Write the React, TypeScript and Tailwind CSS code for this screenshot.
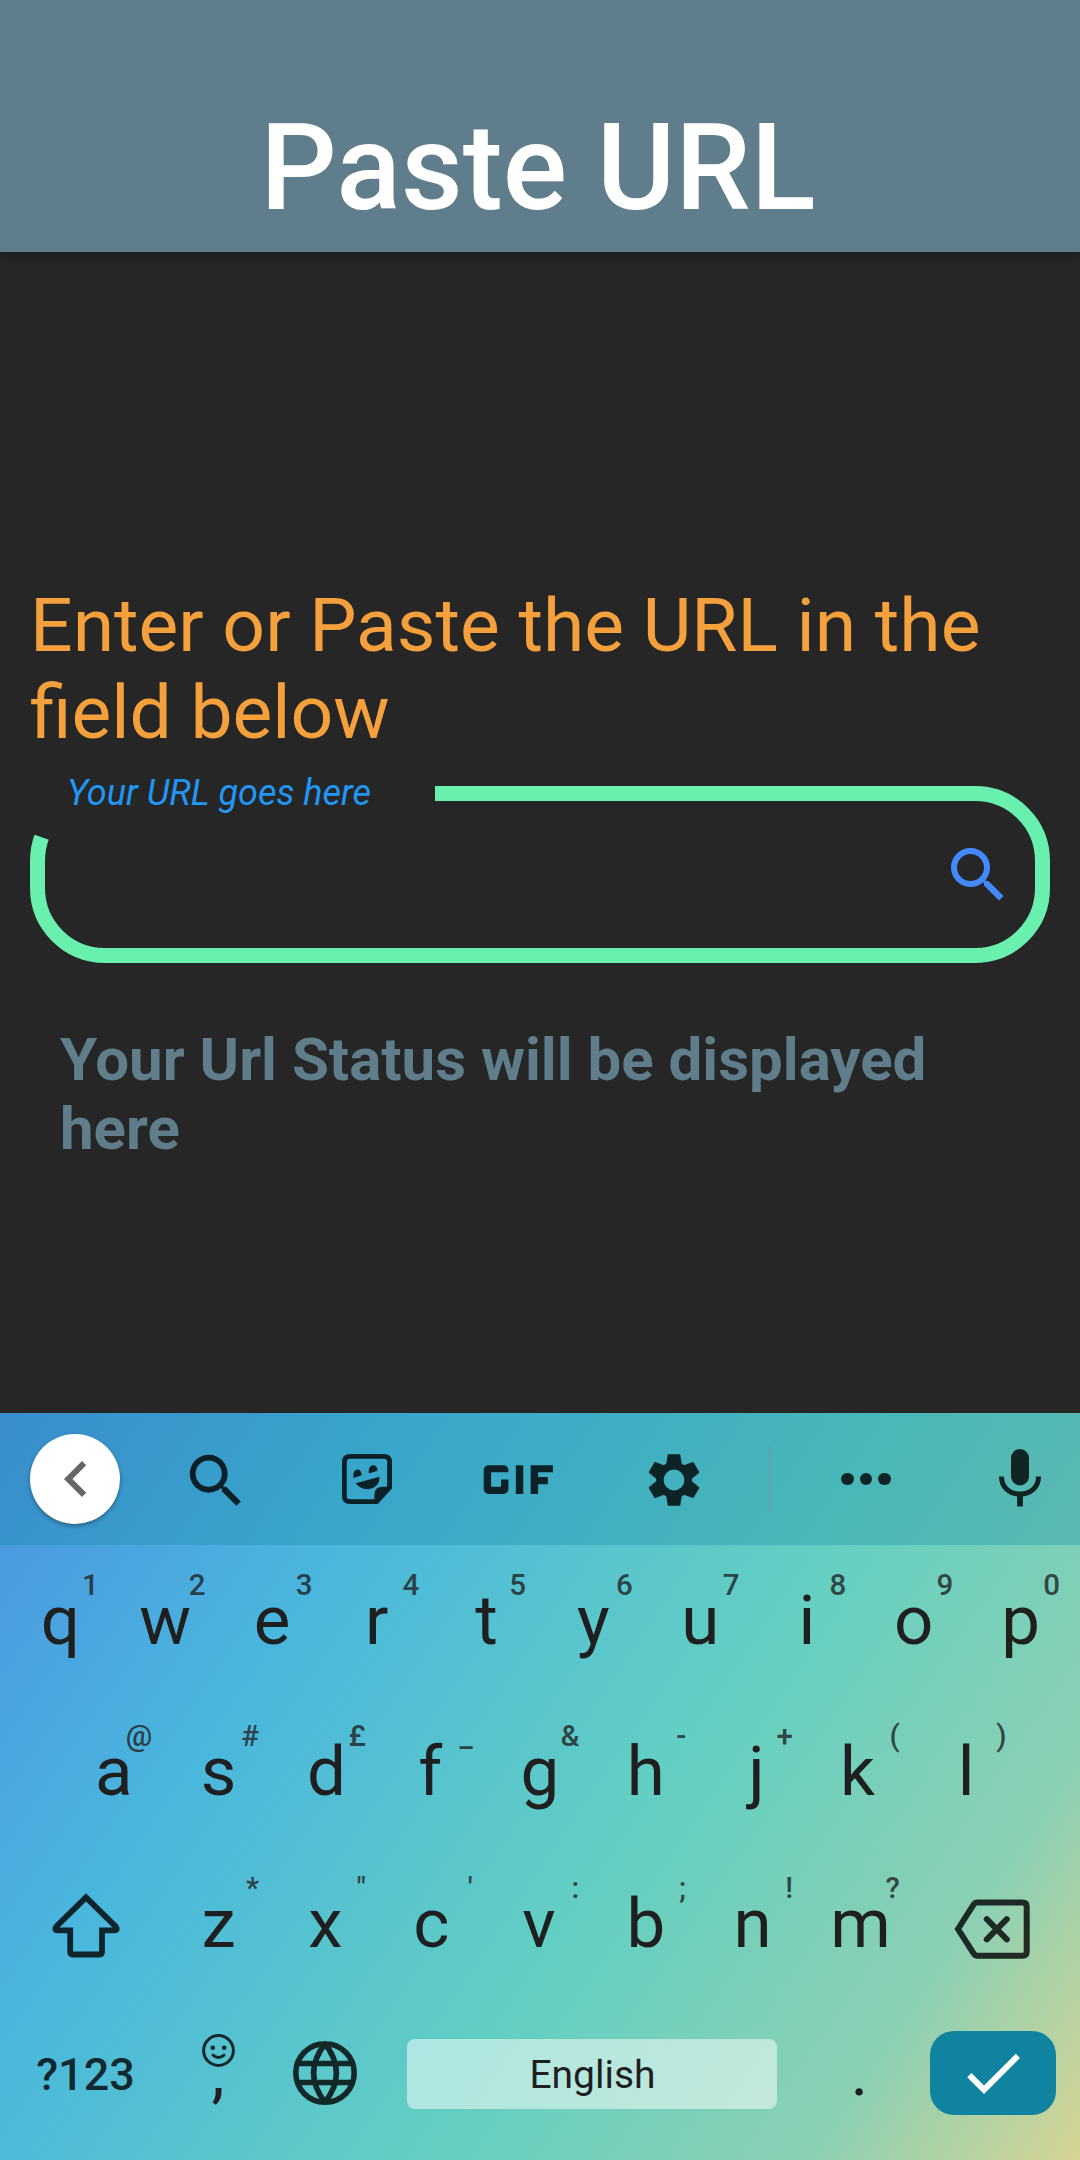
import React from "react";
import { MdCheck, MdChevronLeft, MdGif, MdSearch } from "react-icons/md";

type KeyDef = { label: string; hint: string; nudge?: number };

const ROW_ONE: KeyDef[] = [
  { label: "q", hint: "1", nudge: 1 },
  { label: "w", hint: "2", nudge: -1 },
  { label: "e", hint: "3", nudge: -1 },
  { label: "r", hint: "4", nudge: -3 },
  { label: "t", hint: "5" },
  { label: "y", hint: "6" },
  { label: "u", hint: "7" },
  { label: "i", hint: "8" },
  { label: "o", hint: "9" },
  { label: "p", hint: "0" },
];
const ROW_TWO: KeyDef[] = [
  { label: "a", hint: "@", nudge: 1 },
  { label: "s", hint: "#", nudge: -1 },
  { label: "d", hint: "£" },
  { label: "f", hint: "_", nudge: -3 },
  { label: "g", hint: "&" },
  { label: "h", hint: "-", nudge: -1 },
  { label: "j", hint: "+", nudge: 3 },
  { label: "k", hint: "(", nudge: -3 },
  { label: "l", hint: ")", nudge: -1 },
];
const ROW_THREE: KeyDef[] = [
  { label: "z", hint: "*", nudge: -1 },
  { label: "x", hint: '"', nudge: -1 },
  { label: "c", hint: "'", nudge: -2 },
  { label: "v", hint: ":", nudge: -1 },
  { label: "b", hint: ";", nudge: -1 },
  { label: "n", hint: "!", nudge: -1 },
  { label: "m", hint: "?" },
];

function Key({ def }: { def: KeyDef }) {
  return (
    <div className="flex w-[106.8px] flex-col pt-[14px]">
      <span className="pr-[14px] text-right text-[29.5px] font-medium leading-[30px] text-[#212121]/80">{def.hint}</span>
      <span
        className="-mt-[14px] text-center text-[69px] leading-[70px] text-[#1f1f1f]"
        style={{ transform: `translateX(${def.nudge ?? 0}px)` }}
      >
        {def.label}
      </span>
    </div>
  );
}

function StickerIcon() {
  return (
    <svg width="50" height="50" viewBox="0 0 50 50">
      <g fill="#000" opacity="0.8">
        <path d="M8 2.4H42Q47.6 2.4 47.6 8V33.5L34.5 47.6H8Q2.4 47.6 2.4 42V8Q2.4 2.4 8 2.4Z" fill="none" stroke="#000" strokeWidth="4.8" />
        <path d="M32.4 47V41Q32.4 32.7 40.5 32.7H49V35L36 49.5Z" />
        <path d="M11.6 23.9C9.6 14 19.6 12.6 19.7 21.3Z" />
        <path d="M27 19.4C25 9.8 35.2 8.4 35.6 16.8Z" />
        <path d="M13.6 29.2L37.6 22.8C38 36.5 20.5 39 13.6 29.2Z" />
      </g>
    </svg>
  );
}

const TOOTH_ANGLES = [0, 60, 120, 180, 240, 300];

function GearIcon() {
  return (
    <svg width="54" height="54" viewBox="-27 -27 54 54">
      <mask id="gear-hole">
        <rect x="-27" y="-27" width="54" height="54" fill="white" />
        <circle r="10.4" fill="black" />
      </mask>
      <g mask="url(#gear-hole)" fill="#000" stroke="#000" strokeWidth="1.6" strokeLinejoin="round" opacity="0.8">
        <circle r="17.2" />
        {TOOTH_ANGLES.map((angle) => (
          <path key={angle} d="M-5.5 -25H5.5L7 -16L7 0H-7V-16Z" transform={`rotate(${angle})`} />
        ))}
      </g>
    </svg>
  );
}

function MicIcon() {
  return (
    <svg width="42" height="58" viewBox="0 0 42 58">
      <g fill="none" stroke="#000" strokeWidth="5" opacity="0.8">
        <rect x="12" y="0" width="18" height="36.5" rx="9" fill="#000" stroke="none" />
        <path d="M2.5 27.5C2.5 38.5 10.5 45 21 45S39.5 38.5 39.5 27.5" />
        <path d="M21 46V57.5" strokeWidth="5.8" />
      </g>
    </svg>
  );
}

function ShiftIcon() {
  return (
    <svg width="70" height="66" viewBox="51 1892 70 66" fill="none" stroke="#000" strokeOpacity="0.8" strokeWidth="5.8">
      <path d="M86 1897.4L56.2 1926.6Q53.8 1930.3 57.5 1930.3H70.2V1952Q70.2 1954.5 72.7 1954.5H99.5Q102 1954.5 102 1952V1930.3H114.5Q118.2 1930.3 115.8 1926.6Z" />
    </svg>
  );
}

function BackspaceIcon() {
  return (
    <svg width="78" height="62" viewBox="953 1898 78 62" fill="none" stroke="#000" strokeOpacity="0.8" strokeWidth="6">
      <path d="M958 1929L974 1904Q975.2 1902.4 977 1902.4H1022.5Q1026.7 1902.4 1026.7 1906.5V1951.5Q1026.7 1955.7 1022.5 1955.7H977Q975.2 1955.7 974 1954Z" />
      <path d="M986.8 1919.2L1006.8 1939.4M1006.8 1919.2L986.8 1939.4" strokeLinecap="round" />
    </svg>
  );
}

function SmileIcon() {
  return (
    <svg width="33" height="33" viewBox="0 0 33 33" fill="none" stroke="currentColor" strokeWidth="3">
      <circle cx="16.5" cy="16.5" r="14.9" />
      <circle cx="10.8" cy="13.7" r="2.3" fill="currentColor" stroke="none" />
      <circle cx="22.2" cy="13.7" r="2.3" fill="currentColor" stroke="none" />
      <path d="M11 21.2Q16.5 25.8 22 21.2" strokeLinecap="round" />
    </svg>
  );
}

function GlobeIcon() {
  return (
    <svg width="64" height="64" viewBox="-32 -32 64 64" fill="none" stroke="#000" strokeOpacity="0.8" strokeWidth="5.6">
      <path d="M0 -29.2A29.2 29.2 0 1 0 0 29.2A29.2 29.2 0 1 0 0 -29.2ZM0 -29.2C-15 -10 -15 10 0 29.2C15 10 15 -10 0 -29.2ZM-28 -9.5H28M-28 9.5H28" />
    </svg>
  );
}

function Toolbar() {
  return (
    <div className="flex h-[132px] items-center bg-[#0f83a0]/30 pl-[30px] text-black/80">
      <button className="flex size-[90px] items-center justify-center rounded-full bg-white pl-[2px] text-[#666] shadow-[0_2px_4px_rgba(0,0,0,0.35)]">
        <MdChevronLeft size={72} />
      </button>
      <div className="ml-[21px] flex w-[150px] justify-center pt-[3px]">
        <MdSearch size={70} />
      </div>
      <div className="ml-px flex w-[150px] justify-center">
        <StickerIcon />
      </div>
      <div className="ml-px flex w-[150px] justify-center">
        <MdGif className="h-[115px] w-[118.6px] shrink-0" preserveAspectRatio="none" />
      </div>
      <div className="ml-[6px] flex w-[150px] justify-center pt-[2px]">
        <GearIcon />
      </div>
      <div className="ml-[19px] h-[66px] w-[3px] bg-[#78909c]/40" />
      <div className="ml-[20px] flex w-[150px] justify-center gap-[6px]">
        <span className="size-[12.8px] rounded-full bg-black/80" />
        <span className="size-[12.8px] rounded-full bg-black/80" />
        <span className="size-[12.8px] rounded-full bg-black/80" />
      </div>
      <div className="ml-[19px] flex w-[120px] justify-center pb-[2px]">
        <MicIcon />
      </div>
    </div>
  );
}

function Keyboard() {
  return (
    <section className="h-[747px] bg-[linear-gradient(124deg,#4c92e0_0%,#49b6de_26.5%,#63cfc2_58%,#8cd0b3_83%,#d6d494_100%)]">
      <Toolbar />
      <div className="flex flex-col pt-[11px]">
        <div className="flex h-[151.4px] justify-center">
          {ROW_ONE.map((k) => <Key key={k.label} def={k} />)}
        </div>
        <div className="flex h-[151.4px] justify-center">
          {ROW_TWO.map((k) => <Key key={k.label} def={k} />)}
        </div>
        <div className="flex h-[151.4px] justify-center">
          <div className="flex w-[160.2px] justify-center pt-[33px]"><ShiftIcon /></div>
          {ROW_THREE.map((k) => <Key key={k.label} def={k} />)}
          <div className="flex w-[160.2px] justify-center pr-[4px] pt-[39px]"><BackspaceIcon /></div>
        </div>
        <div className="flex h-[125px] items-center pl-[6px]">
          <div className="w-[159px] pt-[3px] text-center text-[45px] font-medium leading-[45px] text-black/80">?123</div>
          <div className="flex h-full w-[106px] flex-col items-center pt-[24px] text-black/80">
            <SmileIcon />
            <span className="-mt-[29px] text-[66px] leading-[70px] text-[#1f1f1f]">,</span>
          </div>
          <div className="flex w-[107px] justify-center"><GlobeIcon /></div>
          <div className="ml-[29px] mt-[2px] flex h-[70px] w-[370px] items-center justify-center rounded-[8px] bg-white/50 pl-px pt-[3px] text-[39px] text-[#1f1f1f]">English</div>
          <div className="ml-[29px] w-[107px] text-center text-[66px] leading-[70px] text-[#1f1f1f]">.</div>
          <button className="ml-[17px] flex h-[84px] w-[126px] items-center justify-center rounded-[24px] bg-[#0f83a0] text-white">
            <MdCheck size={72} />
          </button>
        </div>
      </div>
    </section>
  );
}

export default function App() {
  return (
    <div className="flex h-[2160px] w-[1080px] flex-col overflow-hidden bg-[#262626] font-['Roboto',sans-serif]">
      <header className="flex h-[252px] shrink-0 items-end justify-center bg-[#607d8b] pb-[14px] pr-[4px] shadow-[0_3px_10px_rgba(0,0,0,0.3)]">
        <h1 className="text-[120px] font-medium leading-[140px] text-white">Paste URL</h1>
      </header>
      <main className="h-[1161px] px-[30px] pt-[330px]">
        <p className="text-[75px] leading-[87px] text-[#f4a03c]">
          Enter or Paste the URL in the
          <br />
          field below
        </p>
        <div className="relative mt-[30px] flex h-[177px] items-center justify-end rounded-[75px] border-[15px] border-[#69f0ae] pr-[21px]">
          <span className="absolute -left-[18px] -top-[18px] h-[60px] w-[408px] bg-[#262626] [clip-path:polygon(0_0,100%_0,100%_45px,60px_60px,24px_57.5px,0_49px)]" />
          <label className="absolute left-[22px] top-[-29px] text-[36px] italic leading-[42px] text-[#2196f3]">Your URL goes here</label>
          <MdSearch size={72} className="text-[#448aff]" />
        </div>
        <p className="mt-[62px] pl-[30px] text-[60px] font-bold leading-[69px] text-[#607d8b]">
          Your Url Status will be displayed
          <br />
          here
        </p>
      </main>
      <Keyboard />
    </div>
  );
}
